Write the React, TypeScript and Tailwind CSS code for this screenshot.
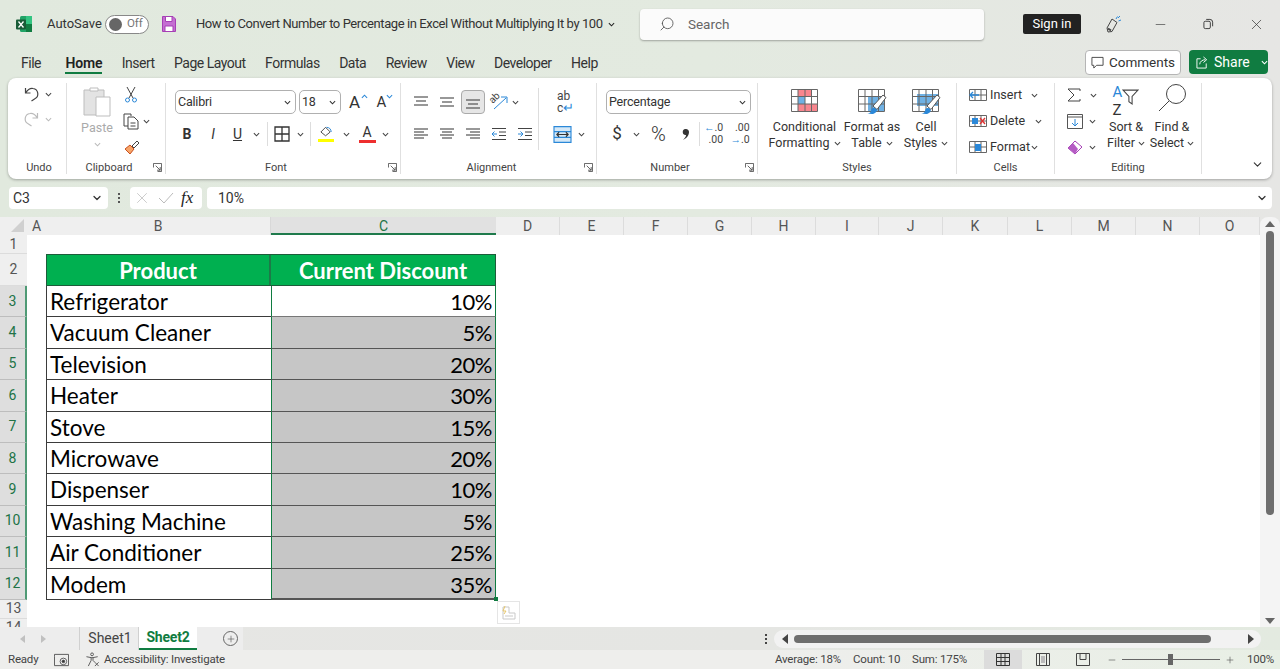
import { ReactNode } from 'react';
import { ChevronDown, Minus, Plus, Search, X } from 'lucide-react';

const products: [string, string][] = [
  ['Refrigerator', '10%'],
  ['Vacuum Cleaner', '5%'],
  ['Television', '20%'],
  ['Heater', '30%'],
  ['Stove', '15%'],
  ['Microwave', '20%'],
  ['Dispenser', '10%'],
  ['Washing Machine', '5%'],
  ['Air Conditioner', '25%'],
  ['Modem', '35%'],
];

const tabs = ['File', 'Home', 'Insert', 'Page Layout', 'Formulas', 'Data', 'Review', 'View', 'Developer', 'Help'];

const otherColumns = [
  ['D', 'w-[64px]'],
  ['E', 'w-[64px]'],
  ['F', 'w-[64px]'],
  ['G', 'w-[64px]'],
  ['H', 'w-[64px]'],
  ['I', 'w-[63px]'],
  ['J', 'w-[64px]'],
  ['K', 'w-[65px]'],
  ['L', 'w-[64px]'],
  ['M', 'w-[64px]'],
  ['N', 'w-[64px]'],
  ['O', 'w-[60px]'],
];

function Chev({ className = 'text-[#444]' }: { className?: string }) {
  return (
    <svg viewBox="0 0 8 5" className={`w-[7px] h-[5px] shrink-0 ${className}`} fill="none" stroke="currentColor" strokeWidth="1.2">
      <path d="M1 1l3 3 3-3" />
    </svg>
  );
}

function Launcher() {
  return (
    <svg viewBox="0 0 10 10" className="absolute right-[3px] bottom-[2px] w-[9px] h-[9px]" fill="none" stroke="#555" strokeWidth="1">
      <path d="M.5 5V.5h9v9H5" />
      <path d="M3 3l5 5M8 4.500V8H4.500" />
    </svg>
  );
}

function Group({ width, label, labelClass = '', launcher, children }: { width: string; label: string; labelClass?: string; launcher?: boolean; children: ReactNode }) {
  return (
    <div className={`relative h-full flex flex-col border-r border-[#e0e0e0] shrink-0 ${width}`}>
      <div className="flex-1 min-h-0">{children}</div>
      <div className={`h-[12px] text-center text-[11px] leading-[12px] text-[#444] ${launcher ? 'pr-[14px]' : ''} ${labelClass}`}>{label}</div>
      {launcher && <Launcher />}
    </div>
  );
}

function Cell({ w = 'w-[26px]', children }: { w?: string; children: ReactNode }) {
  return <div className={`${w} h-[24px] flex items-center justify-center shrink-0`}>{children}</div>;
}

function Lines({ rows }: { rows: [number, number, number][] }) {
  return (
    <svg viewBox="0 0 16 14" className="w-[16px] h-[14px]" stroke="#444" strokeWidth="1.1">
      {rows.map(([a, b, y]) => (
        <path key={y} d={`M${a} ${y}H${b}`} />
      ))}
    </svg>
  );
}

function Select({ label, w }: { label: string; w: string }) {
  return (
    <div className={`${w} h-[24px] flex items-center justify-between pl-[2px] pr-[4px] border border-[#b0b0b0] rounded-[5px] bg-white text-[12.5px] tracking-[-0.2px] text-[#333] shrink-0`}>
      <span>{label}</span>
      <Chev className="text-[#333]" />
    </div>
  );
}

function GridIcon({ children, overlay }: { children?: ReactNode; overlay?: ReactNode }) {
  return (
    <svg viewBox="0 0 30 26" className="w-[30px] h-[26px]" fill="none">
      {children}
      <path d="M1.500 1.500h26v22h-26zM1.500 8.500h26M1.500 16h26M8 1.500v22M15 1.500v22M21.500 1.500v22" stroke="#666" strokeWidth="1" />
      {overlay}
    </svg>
  );
}

function Brush() {
  return (
    <g>
      <path d="M16 18l10-11 3 2.500-9 12z" fill="#fff" stroke="#555" strokeWidth="1" />
      <path d="M10 25.500c2.500 0 4-1 4.500-4.500 1.500-1.500 3.500-1.500 5 .5 1 2-1.500 4.500-4.500 4.500z" fill="#2b88d8" />
    </g>
  );
}

function SmallGrid({ children }: { children?: ReactNode }) {
  return (
    <svg viewBox="0 0 18 16" className="w-[18px] h-[16px]" fill="none">
      <path d="M.5 2.500h17v11H.5zM.5 8h17M6 2.500v11M12 2.500v11" stroke="#666" strokeWidth="1" />
      {children}
    </svg>
  );
}

function BigButton({ top, bottom, w, children }: { top: string; bottom: string; w: string; children: ReactNode }) {
  return (
    <div className={`${w} flex flex-col items-center shrink-0`}>
      <div className="h-[31px] flex items-start">{children}</div>
      <div className="text-[12.5px] leading-[16px] text-[#333] whitespace-nowrap">{top}</div>
      <div className="text-[12.5px] leading-[16px] text-[#333] whitespace-nowrap flex items-center gap-[4px]">
        {bottom}
        <Chev />
      </div>
    </div>
  );
}

function TitleBar() {
  return (
    <div className="h-[48px] flex items-center shrink-0">
      <svg viewBox="0 0 18 18" className="ml-[15px] w-[18px] h-[18px] shrink-0">
        <rect x="5" y="1" width="12" height="16" rx="1.500" fill="#21a366" />
        <rect x="11" y="1" width="6" height="8" fill="#33c481" />
        <rect x="11" y="9" width="6" height="8" fill="#107c41" />
        <rect x="1" y="4.500" width="10" height="10" rx="1" fill="#185c37" />
        <path d="M3.500 6.500l5 6M8.500 6.500l-5 6" stroke="#fff" strokeWidth="1.300" />
      </svg>
      <span className="ml-[14px] text-[13px] text-[#333]">AutoSave</span>
      <div className="ml-[3px] w-[44px] h-[19px] flex items-center gap-[5px] pl-[3px] rounded-full border border-[#888] bg-white shrink-0">
        <div className="w-[13px] h-[13px] rounded-full bg-[#666]" />
        <span className="text-[11.5px] text-[#777]">Off</span>
      </div>
      <svg viewBox="0 0 14 16" className="ml-[13px] w-[14px] h-[16px] shrink-0">
        <path d="M.5.500h10.500l2.500 2.500v12.500H.500z" fill="#c46fd2" stroke="#a63fb5" />
        <path d="M3.500.500h6.500v5H3.500zM3 10h8v5.500H3z" fill="#fff" stroke="#a63fb5" />
      </svg>
      <span className="ml-[20px] w-[407px] text-[13px] tracking-[-0.42px] text-[#333] whitespace-nowrap">How to Convert Number to Percentage in Excel Without Multiplying It by 100</span>
      <Chev className="ml-[5px] text-[#222]" />
      <div className="ml-[25px] w-[344px] h-[31px] flex items-center bg-[#fbfbfb] rounded-[4px] shadow-[0_1px_2px_rgba(0,0,0,0.3)] shrink-0">
        <Search className="ml-[19px] w-[16px] h-[16px] text-[#555] -scale-x-100" strokeWidth={1.300} />
        <span className="ml-[13px] text-[13.5px] text-[#666]">Search</span>
      </div>
      <div className="ml-[39px] w-[58px] h-[20px] flex items-center justify-center bg-[#222] rounded-[2px] text-[13px] text-white shrink-0">Sign in</div>
      <svg viewBox="0 0 18 18" className="ml-[23px] w-[18px] h-[18px] shrink-0" fill="none">
        <path d="M3 13l5-9 5 3.500-5 9-4 .5z" stroke="#444" strokeWidth="1" />
        <path d="M4 13.500l3 2" stroke="#444" strokeWidth="2" />
        <path d="M12 4l1.500-2.500M14.500 6l2.500-1M14 3l2-2" stroke="#2b88d8" strokeWidth="1" />
      </svg>
      <Minus className="ml-[31px] w-[15px] h-[15px] text-[#333]" strokeWidth={1} />
      <svg viewBox="0 0 12 12" className="ml-[35px] w-[11px] h-[12px] shrink-0" fill="none" stroke="#333" strokeWidth="1">
        <rect x="1" y="3" width="7" height="8" rx="1.500" />
        <path d="M3.500 1h4a3 3 0 0 1 3 3v4.500" />
      </svg>
      <X className="ml-[34px] w-[17px] h-[17px] text-[#333]" strokeWidth={1} />
    </div>
  );
}

function TabRow() {
  return (
    <div className="h-[30px] flex items-start shrink-0 pl-[21px]">
      <div className="flex gap-[19.500px] mt-[5px]">
        {tabs.map((t) => (
          <div key={t} className={`relative text-[14px] leading-[20px] whitespace-nowrap ${t === 'Home' ? 'ml-[5px] font-semibold text-[#222] tracking-[-0.2px]' : 'text-[#333] tracking-[-0.5px]'}`}>
            {t}
            {t === 'Home' && <div className="absolute left-0 right-0 top-[19px] h-[2px] bg-[#107c41]" />}
          </div>
        ))}
      </div>
      <div className="ml-auto flex items-start gap-[8px] mt-[2px] pr-[12px]">
        <div className="w-[96px] h-[25px] flex items-center justify-center gap-[5px] bg-white border border-[#b5b5b5] rounded-[4px] text-[13.500px] text-[#333]">
          <svg viewBox="0 0 14 14" className="w-[13px] h-[13px]" fill="none" stroke="#444" strokeWidth="1">
            <path d="M1 1.500h12v8.500H6l-3 3v-3H1z" />
          </svg>
          Comments
        </div>
        <div className="w-[79px] h-[24px] flex items-center gap-[5px] pl-[7px] bg-[#107c41] rounded-[4px] text-[14px] text-white">
          <svg viewBox="0 0 14 14" className="w-[13px] h-[13px]" fill="none" stroke="#fff" strokeWidth="1">
            <path d="M5 3H1v10h10V8M4 9c0-3 3-5 6-5M8 1l3.500 3L8 7" />
          </svg>
          Share
          <Chev className="ml-[6px] text-white" />
        </div>
      </div>
    </div>
  );
}

function Ribbon() {
  return (
    <div className="mx-[8px] h-[101px] py-[5px] flex bg-white rounded-[8px] shadow-[0_1px_3px_rgba(0,0,0,0.3)] shrink-0 relative">
      <Group width="w-[59px]" label="Undo" labelClass="pl-[4px]">
        <div className="pl-[15px] pt-[3px] flex flex-col gap-[9px]">
          <div className="flex items-center gap-[5px]">
            <svg viewBox="0 0 16 16" className="w-[17px] h-[16px]" fill="none" stroke="#444" strokeWidth="1.200">
              <path d="M2 2v5h5M2 7c2-3 5-5 7.500-4.500a5.500 5.500 0 0 1 1.500 10.500L8 15" />
            </svg>
            <Chev />
          </div>
          <div className="flex items-center gap-[5px]">
            <svg viewBox="0 0 16 16" className="w-[17px] h-[16px]" fill="none" stroke="#bbb" strokeWidth="1.200">
              <path d="M14 2v5H9M14 7c-2-3-5-5-7.500-4.500A5.500 5.500 0 0 0 5 13l3 2" />
            </svg>
            <Chev className="text-[#bbb]" />
          </div>
        </div>
      </Group>

      <Group width="w-[99px]" label="Clipboard" launcher>
        <div className="flex pl-[14px] pt-[3px]">
          <div className="w-[32px] flex flex-col items-center">
            <svg viewBox="0 0 28 31" className="w-[28px] h-[31px]" fill="none">
              <path d="M1 4h20v25H1z" fill="#e3e3e3" stroke="#bdbdbd" />
              <path d="M7 5V2h8v3z" fill="#fff" stroke="#bdbdbd" />
              <path d="M13 11h14v19H13z" fill="#fff" stroke="#bdbdbd" />
            </svg>
            <span className="mt-[2px] text-[12.500px] leading-[18px] text-[#aaa]">Paste</span>
            <Chev className="mt-[5px] text-[#bbb]" />
          </div>
          <div className="ml-[11px] flex flex-col gap-[10px]">
            <svg viewBox="0 0 14 17" className="w-[14px] h-[17px]" fill="none" strokeWidth="1">
              <path d="M3 1l6 11M11 1L5 12" stroke="#444" />
              <circle cx="3.500" cy="14" r="2" stroke="#2b88d8" />
              <circle cx="10.500" cy="14" r="2" stroke="#2b88d8" />
            </svg>
            <div className="flex items-center gap-[4px] -ml-[1px]">
              <svg viewBox="0 0 16 17" className="w-[16px] h-[17px]" fill="none" stroke="#444" strokeWidth="1">
                <path d="M1 1h7v2M1 1v12h4" />
                <path d="M5 4h6l4 4v8H5zM7.500 10h5M7.500 13h5" />
              </svg>
              <Chev />
            </div>
            <svg viewBox="0 0 16 15" className="w-[16px] h-[15px]" fill="none">
              <path d="M8 6l5-5 2 2-5 5z" stroke="#444" />
              <path d="M1 9l5-4 4 4-4 5z" fill="#f7a56a" stroke="#c8501e" />
            </svg>
          </div>
        </div>
      </Group>

      <Group width="w-[235px]" label="Font" launcher>
        <div className="pl-[9px] pt-[7px]">
          <div className="flex items-center">
            <Select label="Calibri" w="w-[121px]" />
            <div className="w-[3px]" />
            <Select label="18" w="w-[42px]" />
            <div className="ml-[8px] w-[26px] text-[17px] leading-[24px] text-[#333] relative">
              A
              <Chev className="absolute left-[12px] top-[4px] rotate-180 text-[#2b88d8]" />
            </div>
            <div className="w-[26px] pl-[2px] text-[15px] leading-[24px] text-[#333] relative">
              A
              <Chev className="absolute left-[12px] top-[4px] text-[#2b88d8]" />
            </div>
          </div>
          <div className="flex items-center mt-[8px] ml-[-1px]">
            <Cell><span className="text-[14px] font-bold text-[#333]">B</span></Cell>
            <Cell><span className="text-[14px] italic text-[#333]">I</span></Cell>
            <Cell w="w-[23px]"><span className="text-[14px] underline text-[#333]">U</span></Cell>
            <Cell w="w-[15px]"><Chev /></Cell>
            <div className="w-[1px] h-[24px] bg-[#ddd] ml-[3px]" />
            <Cell w="w-[27px]">
              <svg viewBox="0 0 16 16" className="w-[16px] h-[16px]" fill="none" stroke="#333" strokeWidth="1.300">
                <path d="M1 1h14v14H1zM8 1v14M1 8h14" />
              </svg>
            </Cell>
            <Cell w="w-[10px]"><Chev /></Cell>
            <div className="w-[1px] h-[24px] bg-[#ddd] ml-[5px]" />
            <Cell w="w-[30px]">
              <div className="flex flex-col items-center">
                <svg viewBox="0 0 16 12" className="w-[15px] h-[12px]" fill="none" stroke="#444">
                  <path d="M2 6l5-5 5 5-5 4z" />
                  <path d="M8 1c3 0 5 2 5 5" stroke="#2b88d8" />
                </svg>
                <div className="w-[16px] h-[3px] bg-[#ffff00] mt-[1px]" />
              </div>
            </Cell>
            <Cell w="w-[10px]"><Chev /></Cell>
            <Cell w="w-[32px]">
              <div className="flex flex-col items-center">
                <span className="text-[14px] leading-[13px] text-[#333]">A</span>
                <div className="w-[17px] h-[3px] bg-[#ee2f2f] mt-[1px]" />
              </div>
            </Cell>
            <Cell w="w-[4px]"><Chev /></Cell>
          </div>
        </div>
      </Group>

      <Group width="w-[196px]" label="Alignment" launcher>
        <div className="flex pl-[7px] pt-[7px]">
          <div className="w-[130px] shrink-0">
            <div className="flex items-center">
              <Cell><Lines rows={[[1, 15, 2], [3, 13, 6], [1, 15, 10]]} /></Cell>
              <Cell><Lines rows={[[1, 15, 3], [3, 13, 7], [1, 15, 11]]} /></Cell>
              <div className="w-[24px] h-[24px] ml-[1px] mr-[1px] flex items-center justify-center bg-[#e6e6e6] border border-[#aaa] rounded-[4px]">
                <Lines rows={[[1, 15, 5], [3, 13, 9], [1, 15, 13]]} />
              </div>
              <Cell>
                <div className="relative w-[18px] h-[18px]">
                  <span className="absolute left-[-1px] top-[0px] -rotate-45 text-[10px] leading-[10px] text-[#444]">ab</span>
                  <svg viewBox="0 0 18 18" className="absolute inset-0 w-[18px] h-[18px]" fill="none" stroke="#2b88d8">
                    <path d="M4 16L16 5M11 4h6v6" />
                  </svg>
                </div>
              </Cell>
              <Chev />
            </div>
            <div className="flex items-center mt-[8px]">
              <Cell><Lines rows={[[1, 15, 2], [1, 11, 5], [1, 15, 8], [1, 11, 11]]} /></Cell>
              <Cell><Lines rows={[[1, 15, 2], [3, 13, 5], [1, 15, 8], [3, 13, 11]]} /></Cell>
              <Cell><Lines rows={[[1, 15, 2], [5, 15, 5], [1, 15, 8], [5, 15, 11]]} /></Cell>
              <Cell>
                <svg viewBox="0 0 16 14" className="w-[16px] h-[14px]" fill="none" stroke="#444">
                  <path d="M1 1.500h14M8 5h7M8 8.500h7M1 12.500h14" />
                  <path d="M6 7H1M3.500 4.500L1 7l2.500 2.500" stroke="#2b88d8" />
                </svg>
              </Cell>
              <Cell>
                <svg viewBox="0 0 16 14" className="w-[16px] h-[14px]" fill="none" stroke="#444">
                  <path d="M1 1.500h14M8 5h7M8 8.500h7M1 12.500h14" />
                  <path d="M1 7h5M3.500 4.500L6 7 3.500 9.500" stroke="#2b88d8" />
                </svg>
              </Cell>
            </div>
          </div>
          <div className="w-[1px] h-[62px] -mt-[2px] bg-[#ddd] shrink-0" />
          <div className="pl-[14px] flex flex-col">
            <div className="h-[24px] pl-[4px] text-[12px] leading-[12px] text-[#444]">
              <div>ab</div>
              <div className="flex items-center">
                c<span className="text-[#2b88d8] text-[13px] leading-[12px]">↵</span>
              </div>
            </div>
            <div className="mt-[8px] h-[24px] flex items-center gap-[6px]">
              <svg viewBox="0 0 16 15" className="w-[19px] h-[17px]" fill="#d5e8f7" stroke="#2b88d8">
                <path d="M.5.500h15v14H.5zM.5 5h15M.5 10h15" />
                <path d="M3 7.500h10M5 5.500l-2 2 2 2M11 5.500l2 2-2 2" stroke="#333" fill="none" />
              </svg>
              <Chev />
            </div>
          </div>
        </div>
      </Group>

      <Group width="w-[161px]" label="Number" launcher>
        <div className="pl-[9px] pt-[7px]">
          <Select label="Percentage" w="w-[145px]" />
          <div className="flex items-center mt-[8px]">
            <Cell w="w-[22px]"><span className="text-[17px] text-[#333]">$</span></Cell>
            <Cell w="w-[16px]"><Chev /></Cell>
            <Cell w="w-[29px]"><span className="text-[20px] font-light text-[#333]">%</span></Cell>
            <Cell w="w-[25px]">
              <svg viewBox="0 0 9 13" className="w-[9px] h-[13px]" fill="#333">
                <path d="M4.500 1a3 3 0 0 1 3.500 3c0 3.500-2.500 6.500-6 8 2-2 3-3.500 3-5a3 3 0 0 1-.5-6z" />
              </svg>
            </Cell>
            <div className="w-[1px] h-[24px] bg-[#ddd] ml-[1px]" />
            <Cell w="w-[27px]">
              <div className="text-[10.500px] leading-[12px] text-right text-[#444]">
                <div><span className="text-[#2b88d8]">←</span>.0</div>
                <div>.00</div>
              </div>
            </Cell>
            <Cell w="w-[26px]">
              <div className="text-[10.500px] leading-[12px] text-right text-[#444]">
                <div>.00</div>
                <div><span className="text-[#2b88d8]">→</span>.0</div>
              </div>
            </Cell>
          </div>
        </div>
      </Group>

      <Group width="w-[199px]" label="Styles">
        <div className="flex pt-[5px] pl-[9px]">
          <BigButton top="Conditional" bottom="Formatting" w="w-[75px]">
            <GridIcon>
              <path d="M8 2h14v6H8zM8 16h19v7H8z" fill="#f8868e" />
              <path d="M8 8h7v8H8z" fill="#6fb1e4" />
            </GridIcon>
          </BigButton>
          <BigButton top="Format as" bottom="Table" w="w-[60px]">
            <GridIcon overlay={<Brush />}>
              <path d="M11 8h17v15H11z" fill="#6fb1e4" />
            </GridIcon>
          </BigButton>
          <BigButton top="Cell" bottom="Styles" w="w-[48px]">
            <GridIcon overlay={<Brush />}>
              <path d="M6 6h21v12H6z" fill="#6fb1e4" />
            </GridIcon>
          </BigButton>
        </div>
      </Group>

      <Group width="w-[98px]" label="Cells">
        <div className="flex flex-col gap-[10px] pl-[12px] pt-[4px] text-[12.500px] text-[#333] leading-[16px]">
          <div className="flex items-center">
            <SmallGrid>
              <path d="M1 8h9M4 5L1 8l3 3" stroke="#2b88d8" strokeWidth="1.300" />
            </SmallGrid>
            <span className="ml-[3px] w-[41px]">Insert</span>
            <Chev />
          </div>
          <div className="flex items-center">
            <SmallGrid>
              <path d="M3 5h6v6H3z" fill="#2b88d8" />
              <path d="M11 5l5 6M16 5l-5 6" stroke="#e03131" strokeWidth="1.300" />
            </SmallGrid>
            <span className="ml-[3px] w-[45px]">Delete</span>
            <Chev />
          </div>
          <div className="flex items-center">
            <SmallGrid>
              <path d="M6 5h6v7H6z" fill="#2b88d8" />
            </SmallGrid>
            <span className="ml-[3px] w-[41px]">Format</span>
            <Chev />
          </div>
        </div>
      </Group>

      <Group width="w-[147px]" label="Editing">
        <div className="flex pl-[12px] pt-[3px]">
          <div className="flex flex-col gap-[10px] w-[32px] pt-[1px]">
            <div className="flex items-center gap-[9px] h-[16px]">
              <svg viewBox="0 0 14 14" className="w-[14px] h-[14px]" fill="none" stroke="#444">
                <path d="M13 3V1H1l6 6-6 6h12v-2" />
              </svg>
              <Chev />
            </div>
            <div className="flex items-center gap-[6px] h-[16px]">
              <svg viewBox="0 0 16 15" className="w-[16px] h-[15px]" fill="none" stroke="#555">
                <path d="M.5.500h15v14H.5zM.5 3h15" />
                <path d="M8 5v7M5 9l3 3 3-3" stroke="#2b88d8" />
              </svg>
              <Chev />
            </div>
            <div className="flex items-center gap-[6px] h-[16px]">
              <svg viewBox="0 0 16 15" className="w-[16px] h-[15px]" fill="none">
                <path d="M1 8l7-7 7 6-7 7z" fill="#fff" stroke="#a63fb5" />
                <path d="M1 8l5-5 5 6-3 5z" fill="#b55bc4" />
              </svg>
              <Chev />
            </div>
          </div>
          <div className="w-[48px] ml-[3px] flex flex-col items-center">
            <div className="h-[36px] flex items-start -mt-[3px]">
              <div className="flex flex-col text-[15px] leading-[18px]">
                <span className="text-[#2b88d8]">A</span>
                <span className="text-[#333]">Z</span>
              </div>
              <svg viewBox="0 0 16 16" className="w-[17px] h-[17px] mt-[5px]" fill="none" stroke="#444">
                <path d="M1 2h14L9.500 8v7l-3-2V8z" />
              </svg>
            </div>
            <div className="text-[12.500px] leading-[16px] text-[#333] whitespace-nowrap">Sort &amp;</div>
            <div className="text-[12.500px] leading-[16px] text-[#333] whitespace-nowrap flex items-center gap-[3px]">Filter <Chev /></div>
          </div>
          <div className="w-[44px] flex flex-col items-center">
            <div className="h-[36px] flex items-start -mt-[3px]">
              <svg viewBox="0 0 30 30" className="w-[30px] h-[30px]" fill="none" stroke="#444">
                <circle cx="19" cy="11" r="9.500" />
                <path d="M12 18L2 28" />
              </svg>
            </div>
            <div className="text-[12.500px] leading-[16px] text-[#333] whitespace-nowrap">Find &amp;</div>
            <div className="text-[12.500px] leading-[16px] text-[#333] whitespace-nowrap flex items-center gap-[3px]">Select <Chev /></div>
          </div>
        </div>
      </Group>

      <ChevronDown className="absolute right-[8px] bottom-[8px] w-[13px] h-[13px] text-[#333]" strokeWidth={2} />
    </div>
  );
}

function FormulaBar() {
  return (
    <div className="mt-[8px] h-[22px] pl-[9px] pr-[8px] flex items-center shrink-0">
      <div className="w-[99px] h-full flex items-center justify-between pl-[4px] pr-[5px] bg-white rounded-[4px] text-[14px] text-[#333]">
        C3
        <ChevronDown className="w-[12px] h-[12px] text-[#333]" strokeWidth={2.500} />
      </div>
      <div className="w-[22px] flex flex-col items-center gap-[2px]">
        <div className="w-[2px] h-[2px] bg-[#555]" />
        <div className="w-[2px] h-[2px] bg-[#555]" />
        <div className="w-[2px] h-[2px] bg-[#555]" />
      </div>
      <div className="w-[72px] h-full flex items-center pl-[3px] bg-white rounded-[4px]">
        <X className="w-[18px] h-[18px] text-[#bbb]" strokeWidth={1} />
        <svg viewBox="0 0 16 14" className="ml-[7px] w-[16px] h-[14px]" fill="none" stroke="#bbb">
          <path d="M1 7l5 5 9-10" />
        </svg>
        <span className="ml-[7px] text-[17px] italic font-[Liberation_Serif,serif] text-[#222]">fx</span>
      </div>
      <div className="ml-[5px] flex-1 h-full flex items-center justify-between pl-[11px] pr-[4px] bg-white rounded-[4px] text-[14px] text-[#333]">
        10%
        <ChevronDown className="w-[12px] h-[12px] text-[#333]" strokeWidth={2.500} />
      </div>
    </div>
  );
}

function RowLabel({ n, h, selected }: { n: number; h: string; selected?: boolean }) {
  return (
    <div className={`${h} flex items-center justify-center text-[14px] border-b ${selected ? 'bg-[#dedede] text-[#217346] border-[#bdbdbd] border-r-2 border-r-[#4f9a75]' : 'bg-[#efefef] text-[#555] border-[#dcdcdc]'}`}>
      {n}
    </div>
  );
}

function Sheet() {
  return (
    <div className="mt-[8px] h-[410px] flex shrink-0">
      <div className="w-[1260px] flex flex-col bg-white">
        <div className="h-[18px] flex bg-[#efefef] text-[14px] leading-[19px] text-[#555] shrink-0">
          <div className="w-[27px] relative">
            <div className="absolute right-[3px] bottom-[3px] w-0 h-0 border-b-[13px] border-l-[13px] border-b-[#d0d0d0] border-l-transparent" />
          </div>
          <div className="w-[19px] text-center">A</div>
          <div className="w-[225px] text-center border-r border-[#d8d8d8]">B</div>
          <div className="w-[225px] text-center bg-[#e1e1e1] text-[#217346] border-b-2 border-[#1f7a4c]">C</div>
          {otherColumns.map(([c, w]) => (
            <div key={c} className={`${w} text-center border-r border-[#dcdcdc]`}>{c}</div>
          ))}
        </div>
        <div className="relative flex-1 flex min-h-0 overflow-hidden">
          <div className="w-[27px] shrink-0 bg-[#efefef]">
            <RowLabel n={1} h="h-[19px]" />
            <RowLabel n={2} h="h-[32px]" />
            {products.map((_, i) => (
              <RowLabel key={i} n={i + 3} h="h-[31.400px]" selected />
            ))}
            <RowLabel n={13} h="h-[19px]" />
            <RowLabel n={14} h="h-[19px]" />
          </div>
          <div className="pl-[19px] pt-[19px] font-[Lato,sans-serif] text-black">
            <div className="w-[450px] h-[32px] flex bg-[#00b050] text-white text-[22px] font-bold border border-[#1d5c3a]">
              <div className="w-[224px] text-center leading-[31px] border-r-2 border-[#1d7a48]">Product</div>
              <div className="flex-1 text-center leading-[31px]">Current Discount</div>
            </div>
            {products.map(([name, pct], i) => (
              <div key={name} className="w-[450px] h-[31.400px] flex">
                <div className="w-[225px] pl-[3px] text-[22.500px] leading-[32px] border-l border-b border-[#3b3b3b]">{name}</div>
                <div className={`relative w-[225px] pr-[3px] text-right text-[22px] tracking-[-0.5px] leading-[32px] border-x-[1.500px] border-[#107c41] ${i === 0 ? 'bg-white border-b border-b-[#777]' : 'bg-[#c6c6c6] border-b border-b-[#555]'} ${i === products.length - 1 ? 'border-b-2 border-b-[#107c41]' : ''}`}>
                  {pct}
                  {i === products.length - 1 && <div className="absolute -right-[3px] -bottom-[3px] w-[4px] h-[4px] bg-[#107c41]" />}
                </div>
              </div>
            ))}
          </div>
          <div className="absolute left-[497px] top-[366px] w-[23px] h-[23px] flex items-center justify-center bg-white border border-[#e5e5e5]">
            <svg viewBox="0 0 16 16" className="w-[16px] h-[16px]" fill="none" stroke="#c9c9c9">
              <path d="M2 14h12V8H8V2H2zM4 11h8" />
              <path d="M4 1L2 6h3L3 9" stroke="#e8c76a" />
            </svg>
          </div>
        </div>
      </div>
      <div className="w-[20px] flex flex-col items-center bg-[#f4f4f4] rounded-t-[8px]">
        <div className="mt-[4px] w-0 h-0 border-x-[5px] border-b-[6px] border-x-transparent border-b-[#666]" />
        <div className="mt-[4px] w-[8px] h-[284px] bg-[#6e6e6e] rounded-full" />
        <div className="mt-auto mb-[3px] w-0 h-0 border-x-[5px] border-t-[6px] border-x-transparent border-t-[#666]" />
      </div>
    </div>
  );
}

function SheetTabs() {
  return (
    <div className="h-[23px] flex items-center shrink-0 text-[14px] bg-[linear-gradient(90deg,#e6e6e4,#e5e6e3_60%,#e3eae0)]">
      <div className="w-[79px] h-full flex items-center gap-[16px] pl-[20px] bg-[#ededed]">
        <div className="w-0 h-0 border-y-[4px] border-r-[5px] border-y-transparent border-r-[#c0c0c0]" />
        <div className="w-0 h-0 border-y-[4px] border-l-[5px] border-y-transparent border-l-[#c0c0c0]" />
      </div>
      <div className="w-[60px] h-full flex items-center justify-center bg-[#ededed] border-x border-[#d0d0d0] text-[#444] pl-[2px]">Sheet1</div>
      <div className="w-[58px] h-full flex items-center justify-center bg-white border-b-2 border-[#107c41] font-bold text-[#107c41] tracking-[-0.2px]">Sheet2</div>
      <div className="w-[46px] h-full flex items-center justify-end bg-[#ededed] pr-[5px]">
        <div className="w-[15px] h-[15px] rounded-full border border-[#666] flex items-center justify-center">
          <Plus className="w-[10px] h-[10px] text-[#555]" strokeWidth={1.500} />
        </div>
      </div>
      <div className="ml-[522px] flex flex-col gap-[2px]">
        <div className="w-[2px] h-[2px] bg-[#444]" />
        <div className="w-[2px] h-[2px] bg-[#444]" />
        <div className="w-[2px] h-[2px] bg-[#444]" />
      </div>
      <div className="ml-[7px] w-[487px] h-[18px] flex items-center pl-[8px] pr-[7px] bg-[#f2f2f2] rounded-full">
        <div className="w-0 h-0 border-y-[5px] border-r-[6px] border-y-transparent border-r-[#444]" />
        <div className="ml-[6px] w-[417px] h-[8px] bg-[#6e6e6e] rounded-full" />
        <div className="ml-auto w-0 h-0 border-y-[5px] border-l-[6px] border-y-transparent border-l-[#444]" />
      </div>
    </div>
  );
}

function StatusBar() {
  return (
    <div className="h-[19px] flex items-center shrink-0 text-[11.500px] tracking-[-0.2px] text-[#444] whitespace-nowrap bg-[linear-gradient(90deg,#eeeeec,#eeeeec_60%,#e8efe5)]">
      <span className="ml-[8px] w-[28px]">Ready</span>
      <svg viewBox="0 0 16 14" className="ml-[18px] w-[15px] h-[14px]" fill="none" stroke="#555">
        <path d="M.5 3.500V1h15v12H.5z" />
        <circle cx="10" cy="8.500" r="3.500" fill="#fff" />
        <circle cx="10" cy="8.500" r="1.500" fill="#333" />
      </svg>
      <svg viewBox="0 0 16 16" className="ml-[16px] w-[16px] h-[15px]" fill="none" stroke="#555">
        <circle cx="7" cy="2.500" r="1.500" />
        <path d="M1 5l5 1h2l5-1M6 6v3l-3 6M8 6v3l2 2M10 11l4 4M14 11l-4 4" />
      </svg>
      <span className="ml-[3px]">Accessibility: Investigate</span>
      <div className="ml-auto flex gap-[14px]">
        <span className="w-[64px]">Average: 18%</span>
        <span className="w-[45px]">Count: 10</span>
        <span className="w-[54px]">Sum: 175%</span>
      </div>
      <div className="ml-[18px] w-[38px] h-full flex items-center justify-center bg-[#dcdcdc]">
        <svg viewBox="0 0 14 13" className="w-[14px] h-[13px]" fill="none" stroke="#333">
          <path d="M.5.500h13v12H.5zM.5 4.500h13M.5 8.500h13M5 .5v12M9 .5v12" />
        </svg>
      </div>
      <svg viewBox="0 0 14 13" className="ml-[14px] w-[14px] h-[13px]" fill="none" stroke="#444">
        <path d="M.5.500h13v12H.5zM3.500.500v12M10.500.500v12" />
        <path d="M5 3h4v7H5z" fill="#bbb" stroke="none" />
      </svg>
      <svg viewBox="0 0 14 13" className="ml-[26px] w-[14px] h-[13px]" fill="none" stroke="#444">
        <path d="M.5.500h13v12H.5zM4 .5v6h6v-6" />
      </svg>
      <Minus className="ml-[17px] w-[10px] h-[10px] text-[#555]" strokeWidth={1.500} />
      <div className="relative ml-[5px] w-[98px] h-[1px] bg-[#666]">
        <div className="absolute left-[46px] -top-[5px] w-[5px] h-[11px] bg-[#666]" />
      </div>
      <Plus className="ml-[5px] w-[10px] h-[10px] text-[#555]" strokeWidth={1.500} />
      <span className="ml-[12px] w-[26px] mr-[7px]">100%</span>
    </div>
  );
}

export default function App() {
  return (
    <div className="w-[1280px] h-[669px] overflow-hidden flex flex-col font-[Roboto,sans-serif] bg-[linear-gradient(90deg,#e1e9de_0%,#e3eae0_55%,#e6e6e4_100%)]">
      <TitleBar />
      <TabRow />
      <Ribbon />
      <FormulaBar />
      <Sheet />
      <SheetTabs />
      <StatusBar />
    </div>
  );
}
